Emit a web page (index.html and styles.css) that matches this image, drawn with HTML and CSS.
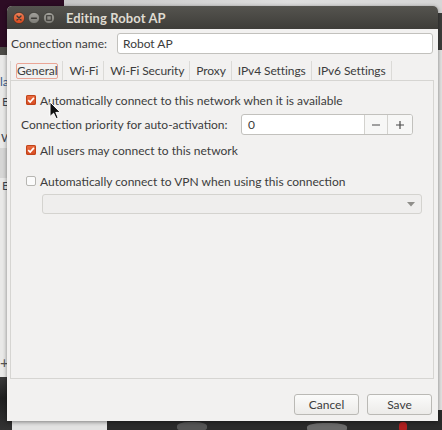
FILE: index.html
```html
<!DOCTYPE html>
<html>
<head>
<meta charset="utf-8">
<title>Editing Robot AP</title>
<link rel="stylesheet" href="styles.css">
</head>
<body>
<div class="desktop">
  <div class="bg bg-purple"></div>
  <div class="bg bg-topgray"></div>
  <div class="bg bg-back-title"></div>
  <div class="bg bg-back">
    <span class="bk bk-la">la</span>
    <span class="bk bk-e1">E</span>
    <span class="bk bk-w">W</span>
    <div class="bk-band"></div>
    <span class="bk bk-e2">E</span>
    <span class="bk bk-plus">+</span>
  </div>
  <div class="bg bg-left-dark"></div>
  <div class="bg bg-bottom-light"></div>
  <div class="bg bg-bottom-photo"><div class="spot spot1"></div><div class="spot spot2"></div><div class="spot spot3"></div></div>
  <div class="bg bg-right-dark"></div>

  <div class="window">
    <div class="titlebar">
      <div class="wbtns">
        <svg class="wbtn" viewBox="0 0 12 12" width="12" height="12">
          <defs>
            <linearGradient id="gc" x1="0" y1="0" x2="0" y2="1"><stop offset="0" stop-color="#f2835a"/><stop offset="1" stop-color="#d8471b"/></linearGradient>
          </defs>
          <circle cx="6" cy="6" r="5.6" fill="url(#gc)" stroke="#3a2a22" stroke-width="0.6"/>
          <path d="M4 4 L8 8 M8 4 L4 8" stroke="#3c3b37" stroke-width="1.4" stroke-linecap="round"/>
        </svg>
        <svg class="wbtn" viewBox="0 0 12 12" width="12" height="12">
          <defs>
            <linearGradient id="gm" x1="0" y1="0" x2="0" y2="1"><stop offset="0" stop-color="#a3a29c"/><stop offset="1" stop-color="#7b7a75"/></linearGradient>
          </defs>
          <circle cx="6" cy="6" r="5.6" fill="url(#gm)" stroke="#36352f" stroke-width="0.6"/>
          <path d="M3.6 6.2 H8.4" stroke="#3c3b37" stroke-width="1.4" stroke-linecap="round"/>
        </svg>
        <svg class="wbtn" viewBox="0 0 12 12" width="12" height="12">
          <circle cx="6" cy="6" r="5.6" fill="url(#gm)" stroke="#36352f" stroke-width="0.6"/>
          <rect x="3.7" y="3.7" width="4.6" height="4.6" fill="none" stroke="#3c3b37" stroke-width="1.1"/>
        </svg>
      </div>
      <div class="title">Editing Robot AP</div>
    </div>

    <div class="content">
      <div class="conn-row">
        <span class="conn-label">Connection name:</span>
        <div class="entry">Robot AP</div>
      </div>

      <div class="notebook">
        <div class="tabs">
          <div class="tab tab-active"><span>General</span></div>
          <div class="tab"><span>Wi-Fi</span></div>
          <div class="tab"><span>Wi-Fi Security</span></div>
          <div class="tab"><span>Proxy</span></div>
          <div class="tab"><span>IPv4 Settings</span></div>
          <div class="tab"><span>IPv6 Settings</span></div>
        </div>
        <div class="page">
          <div class="check-row">
            <span class="cb cb-on"><svg viewBox="0 0 10 10" width="10" height="10"><path d="M2.2 5.2 L4.2 7.1 L7.9 2.9" fill="none" stroke="#fff" stroke-width="1.6"/></svg></span>
            <span>Automatically connect to this network when it is available</span>
          </div>
          <div class="prio-row">
            <span class="prio-label">Connection priority for auto-activation:</span>
            <div class="spin">
              <div class="spin-val">0</div>
              <div class="spin-btn spin-minus"><svg viewBox="0 0 10 10" width="10" height="10"><path d="M1 5 H9" stroke="#4a4a4a" stroke-width="1.2"/></svg></div>
              <div class="spin-btn spin-plus"><svg viewBox="0 0 10 10" width="10" height="10"><path d="M1 5 H9 M5 1 V9" stroke="#4a4a4a" stroke-width="1.2"/></svg></div>
            </div>
          </div>
          <div class="check-row row-users">
            <span class="cb cb-on"><svg viewBox="0 0 10 10" width="10" height="10"><path d="M2.2 5.2 L4.2 7.1 L7.9 2.9" fill="none" stroke="#fff" stroke-width="1.6"/></svg></span>
            <span>All users may connect to this network</span>
          </div>
          <div class="check-row row-vpn">
            <span class="cb cb-off"></span>
            <span>Automatically connect to VPN when using this connection</span>
          </div>
          <div class="combo">
            <svg class="combo-arrow" viewBox="0 0 8 5" width="8" height="5"><path d="M0 0 H8 L4 4.5 Z" fill="#8f8e8a"/></svg>
          </div>
        </div>
      </div>

      <div class="actions">
        <button class="btn">Cancel</button>
        <button class="btn">Save</button>
      </div>
    </div>
  </div>

  <svg class="cursor" viewBox="0 0 12 19" width="12" height="19">
    <path d="M1 1 L1 15.5 L4.6 12.2 L7.1 17.6 L9.2 16.7 L6.8 11.4 L11.3 11.4 Z" fill="#111" stroke="#fff" stroke-width="1" stroke-linejoin="round"/>
  </svg>
</div>
</body>
</html>
```
FILE: styles.css
```css
html, body {
  margin: 0;
  padding: 0;
}
body {
  width: 442px;
  height: 430px;
  overflow: hidden;
  font-family: Lato, "Noto Sans", sans-serif;
  font-size: 12px;
  color: #3c3c3c;
}

/* desktop behind the dialog */
.desktop {
  position: relative;
  width: 442px;
  height: 430px;
  overflow: hidden;
  background: #e3e3e2;
}
.bg { position: absolute; }
.bg-purple { left: 0; top: 0; width: 64px; height: 47px; background: #2d0c24; }
.bg-topgray { left: 64px; top: 0; width: 378px; height: 13px; background: linear-gradient(90deg, #c6c6c6, #dedede 60%, #d6d6d6); }
.bg-back-title { left: 0; top: 47px; width: 12px; height: 8px; background: #4d4c48; }
.bg-back { left: 0; top: 55px; width: 20px; height: 322px; background: #e9e9e8; }
.bk { position: absolute; font-size: 12px; color: #3f4650; line-height: 14px; }
.bk-la { left: 0; top: 20px; color: #3a5a8a; }
.bk-e1 { left: 2px; top: 40px; }
.bk-w { left: 1px; top: 76px; }
.bk-band { position: absolute; left: 0; top: 93px; width: 12px; height: 30px; background: #d6d6d5; }
.bk-e2 { left: 2px; top: 124px; }
.bk-plus { left: 0; top: 300px; font-size: 15px; color: #555; }
.bg-left-dark { left: 0; top: 377px; width: 12px; height: 53px; background: linear-gradient(#3a3a3a, #1f1f1f 40%, #333); }
.bg-bottom-light { left: 12px; top: 410px; width: 95px; height: 20px; background: #e2e2e2; }
.bg-bottom-photo { left: 107px; top: 410px; width: 335px; height: 20px; background: #2b2b2b; overflow: hidden; }
.spot { position: absolute; border-radius: 40%; }
.spot1 { left: 70px; top: 12px; width: 30px; height: 10px; background: #555; }
.spot2 { left: 200px; top: 13px; width: 40px; height: 10px; background: #6a6a6a; }
.spot3 { left: 292px; top: 12px; width: 8px; height: 10px; background: #b02020; }
.bg-right-dark { left: 430px; top: 13px; width: 12px; height: 37px; background: #3d3d3b; }

/* the dialog window */
.window {
  position: absolute;
  left: 7px;
  top: 6px;
  width: 431px;
  height: 415px;
  background: #f2f1f0;
  border-radius: 5px 5px 0 0;
  box-shadow: 0 1px 4px rgba(0, 0, 0, 0.45);
  display: flex;
  flex-direction: column;
}
.titlebar {
  height: 23px;
  flex: none;
  background: linear-gradient(#55544f, #3e3d39);
  border-radius: 5px 5px 0 0;
  display: flex;
  align-items: center;
  padding-left: 6px;
}
.wbtns { display: flex; gap: 3px; }
.wbtn { display: block; }
.title {
  margin-left: 11px;
  font-weight: 700;
  font-size: 13px;
  color: #dfdbd2;
  letter-spacing: 0.1px;
}

.content {
  flex: 1;
  display: flex;
  flex-direction: column;
  padding: 4px 4px 6px 3px;
}

.conn-row {
  display: flex;
  align-items: center;
  height: 21px;
  padding-left: 1px;
  margin-right: 1px;
}
.conn-label { width: 106px; flex: none; }
.entry {
  flex: 1;
  height: 21px;
  box-sizing: border-box;
  border: 1px solid #c2c1bd;
  border-radius: 3px;
  background: #fff;
  padding-left: 5px;
  display: flex;
  align-items: center;
}

/* notebook */
.notebook { margin-top: 7px; display: flex; flex-direction: column; }
.tabs { display: flex; height: 19px; }
.tab {
  display: flex;
  align-items: center;
  padding: 0 4px 0 5px;
  border-right: 1px solid #dbdad7;
  letter-spacing: -0.1px;
}
.tab:first-child { border-left: 1px solid #dbdad7; }
.tab span {
  border: 1px solid transparent;
  border-radius: 2px;
  line-height: 14px;
  padding: 0;
}
.tab-active span { border-color: #eaa596; }

.page {
  height: 299px;
  box-sizing: border-box;
  border: 1px solid #d6d5d2;
  padding: 11px 12px 0 10px;
  display: flex;
  flex-direction: column;
}
.check-row {
  display: flex;
  align-items: center;
  gap: 4px;
  height: 16px;
  margin-left: 5px;
}
.cb {
  width: 10px;
  height: 10px;
  box-sizing: border-box;
  border-radius: 2px;
  flex: none;
  display: flex;
}
.cb svg { display: block; }
.cb-on { background: linear-gradient(#ec6f44, #d54a20); box-shadow: inset 0 0 0 1px #c04319; }
.cb-off { background: #fbfbfb; border: 1px solid #b7b6b2; }

.prio-row {
  display: flex;
  align-items: center;
  height: 21px;
  margin-top: 6px;
}
.prio-label { width: 220px; flex: none; }
.spin {
  width: 172px;
  height: 21px;
  box-sizing: border-box;
  border: 1px solid #c2c1bd;
  border-radius: 3px;
  background: #fff;
  display: flex;
  overflow: hidden;
}
.spin-val {
  flex: 1;
  padding-left: 6px;
  display: flex;
  align-items: center;
}
.spin-btn {
  display: flex;
  align-items: center;
  justify-content: center;
  border-left: 1px solid #d3d2ce;
  background: #f7f7f6;
}
.spin-minus { width: 22px; }
.spin-plus { width: 24px; }
.spin-btn svg { display: block; }

.row-users { margin-top: 7px; }
.row-vpn { margin-top: 15px; }

.combo {
  margin-top: 5px;
  margin-left: 21px;
  width: 380px;
  height: 20px;
  box-sizing: border-box;
  border: 1px solid #d4d3cf;
  border-radius: 3px;
  background: #efeeed;
  display: flex;
  align-items: center;
  justify-content: flex-end;
  padding-right: 6px;
}
.combo-arrow { display: block; }

/* dialog buttons */
.actions {
  margin-top: auto;
  display: flex;
  justify-content: flex-end;
  gap: 8px;
  margin-right: 2px;
}
.btn {
  width: 65px;
  height: 21px;
  box-sizing: border-box;
  border: 1px solid #bab9b5;
  border-radius: 3px;
  background: linear-gradient(#fbfbfa, #ecebe9);
  font: inherit;
  color: #3c3c3c;
  padding: 0;
}

.cursor {
  position: absolute;
  left: 49px;
  top: 101px;
}
```
